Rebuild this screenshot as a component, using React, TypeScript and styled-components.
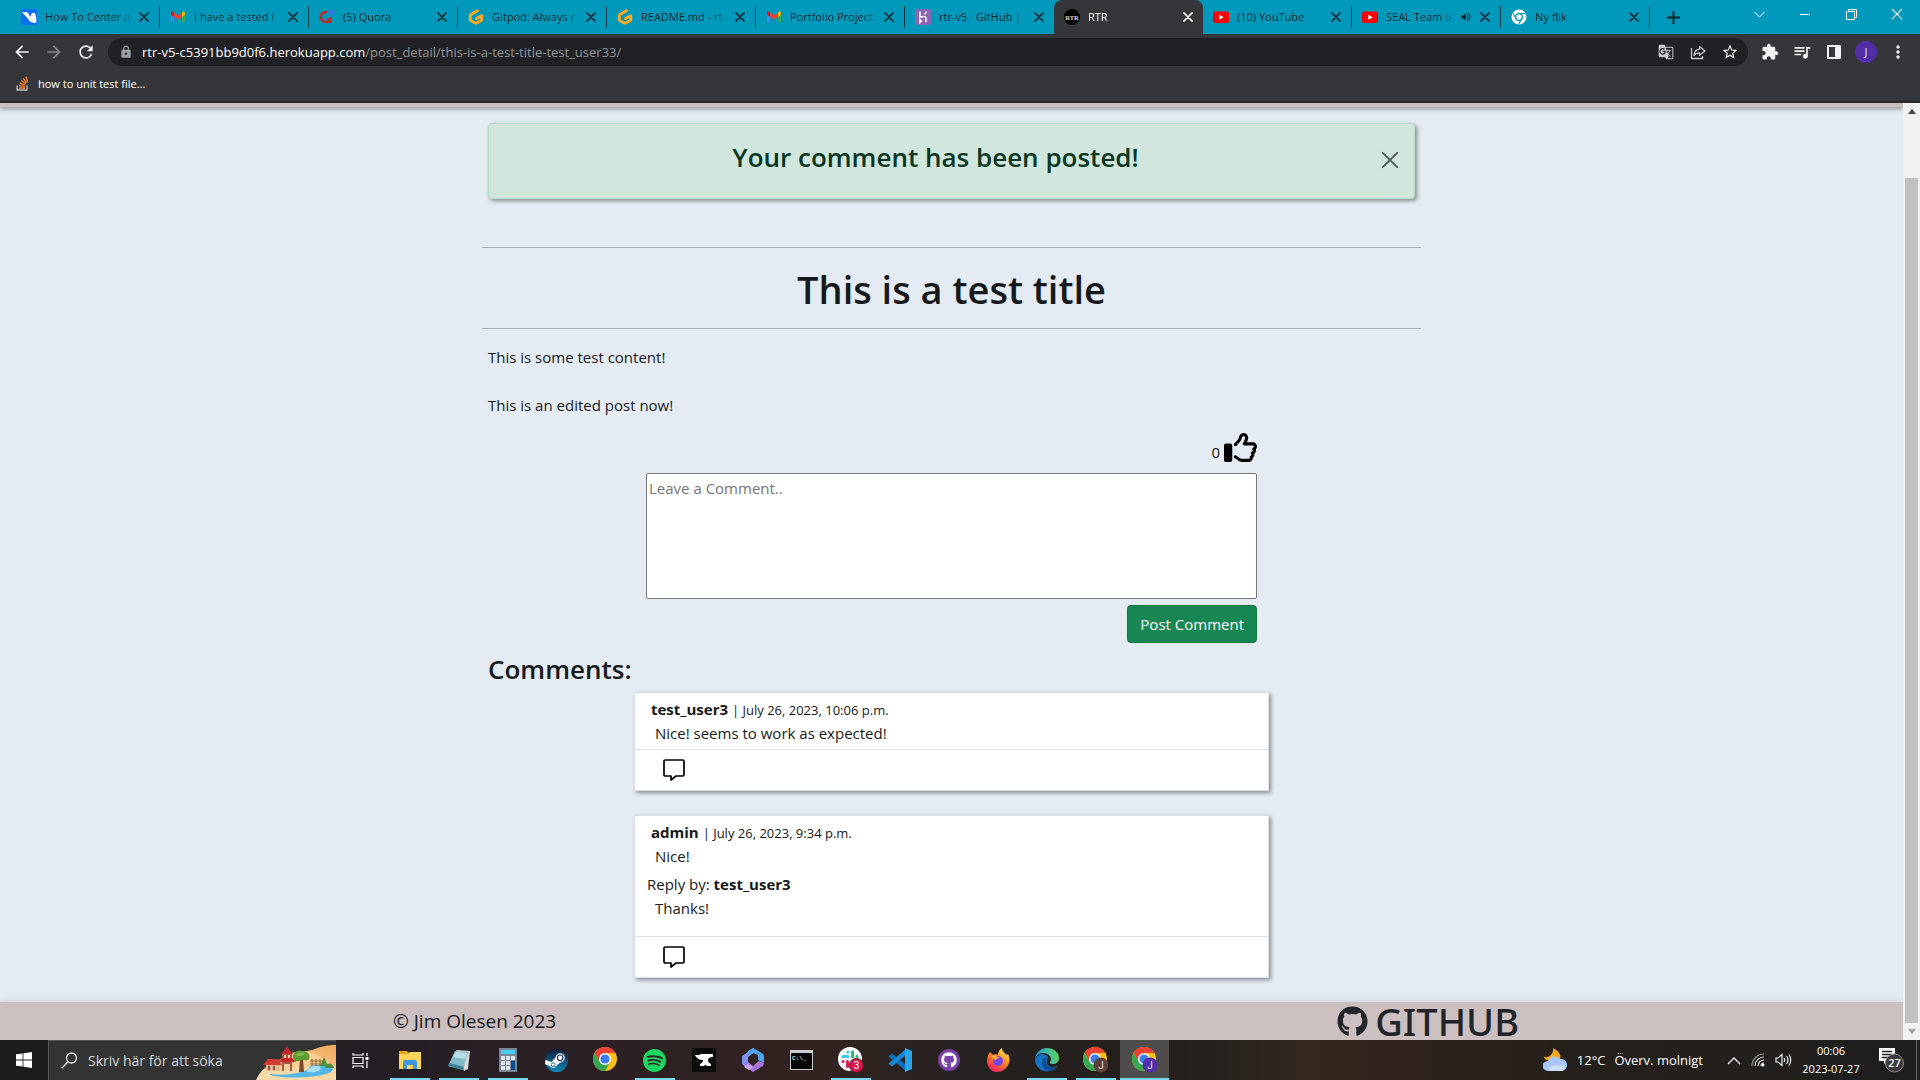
import React, { useState } from "react";
import styled, { createGlobalStyle } from "styled-components";
import { FaGithub, FaRegThumbsUp } from "react-icons/fa6";
import {
  MdArrowBack,
  MdArrowForward,
  MdExtension,
  MdGTranslate,
  MdLock,
  MdMoreVert,
  MdQueueMusic,
  MdRefresh,
  MdStarBorder,
  MdVolumeUp,
} from "react-icons/md";
import { SiSpotify } from "react-icons/si";

const uiFont = `"Open Sans", "Noto Sans", sans-serif`;

const GlobalStyle = createGlobalStyle`
  *, *::before, *::after { box-sizing: border-box; }
  body { margin: 0; font-family: ${uiFont}; font-size: 15px; line-height: 24px; color: #16191c; background: #e4ebf2; }
  button { font: inherit; color: inherit; background: none; border: 0; padding: 0; cursor: pointer; }
  h1, h2, p { margin: 0; }
  svg { display: block; flex: none; }
`;

const Screen = styled.div`
  display: flex;
  flex-direction: column;
  min-height: 100vh;
`;

/* ---------- browser chrome ---------- */

const TabStrip = styled.div`
  display: flex;
  height: 34px;
  padding-left: 11px;
  background: #0099bc;
`;

const Tab = styled.div<{ $active?: boolean; $plain?: boolean }>`
  display: flex;
  align-items: center;
  flex: 0 1 149px;
  min-width: 0;
  padding: 0 7px 0 10px;
  font-size: 11px;
  line-height: 16px;
  color: ${(p) => (p.$active ? "#ffffff" : "#06262e")};
  background: ${(p) => (p.$active ? "#35363a" : "transparent")};
  border-radius: ${(p) => (p.$active ? "8px 8px 0 0" : "0")};
  border-right: ${(p) => (p.$active || p.$plain ? "0" : "1px solid #0a3c48")};
  border-image: linear-gradient(transparent 7px, #0a3c48 7px, #0a3c48 27px, transparent 27px) 1;
`;

const TabIcon = styled.span`
  display: flex;
  width: 16px;
  margin-right: 8px;
`;

const TabTitle = styled.span`
  flex: 1;
  min-width: 0;
  overflow: hidden;
  white-space: nowrap;
  mask-image: linear-gradient(90deg, #000 calc(100% - 16px), transparent);
`;

const TabButton = styled.button`
  display: flex;
  justify-content: center;
  align-items: center;
  width: 16px;
  height: 16px;
  margin-left: 3px;
`;

const NewTab = styled.button`
  display: flex;
  justify-content: center;
  align-items: center;
  width: 28px;
  margin-left: 9px;
  color: #06262e;
`;

const WindowControls = styled.div`
  display: flex;
  align-items: center;
  height: 28px;
  margin-left: auto;
  color: #ffffff;
`;

const WindowButton = styled.button`
  display: flex;
  justify-content: center;
  width: 46px;
`;

const Toolbar = styled.div`
  display: flex;
  align-items: center;
  height: 36px;
  padding: 0 6px 0 12px;
  color: #f1f3f4;
  background: #35363a;
`;

const NavButton = styled.button<{ $dim?: boolean }>`
  display: flex;
  justify-content: center;
  width: 32px;
  color: ${(p) => (p.$dim ? "#83868a" : "#f1f3f4")};
`;

const NavGroup = styled.div`
  display: flex;
  width: 96px;
  margin-left: -6px;
`;

const AddressBar = styled.div`
  display: flex;
  align-items: center;
  flex: 1;
  height: 28px;
  margin: 0 6px;
  padding: 0 2px 0 11px;
  font-size: 13px;
  line-height: 20px;
  color: #9aa0a6;
  background: #202124;
  border-radius: 14px;
`;

const Url = styled.a`
  flex: 1;
  margin-left: 9px;
  color: #8f9398;
  text-decoration: none;
`;

const UrlHost = styled.span`
  color: #ffffff;
`;

const Avatar = styled.span`
  width: 22px;
  height: 22px;
  font-size: 11px;
  line-height: 22px;
  text-align: center;
  color: #e8e0fa;
  background: #512da8;
  border-radius: 50%;
`;

const Bookmarks = styled.nav`
  display: flex;
  align-items: center;
  height: 33px;
  padding: 0 16px 4px;
  background: #35363a;
  border-bottom: 2px solid #2a2a2d;
`;

const Bookmark = styled.a`
  display: flex;
  align-items: center;
  gap: 9px;
  font-size: 11px;
  line-height: 16px;
  color: #ffffff;
  text-decoration: none;
`;

/* ---------- page ---------- */

const Viewport = styled.div`
  display: flex;
  flex: 1;
  background: #e4ebf2;
`;

const Page = styled.div`
  display: flex;
  flex-direction: column;
  flex: 1;
  min-width: 0;
`;

const HeaderEdge = styled.div`
  height: 4px;
  background: #cbbfc0;
  box-shadow: 0 2px 4px rgba(0, 0, 0, 0.4);
`;

const Scrollbar = styled.div`
  display: flex;
  flex-direction: column;
  align-items: center;
  width: 17px;
  background: #f1f1f1;
`;

const ScrollButton = styled.button<{ $dim?: boolean }>`
  display: flex;
  justify-content: center;
  align-items: center;
  width: 17px;
  height: 17px;
  color: ${(p) => (p.$dim ? "#a3a3a3" : "#404040")};
`;

const ScrollTrack = styled.div`
  display: flex;
  flex: 1;
  padding-top: 58px;
`;

const ScrollThumb = styled.div`
  width: 13px;
  background: #c1c1c1;
`;

const Main = styled.main`
  flex: 1;
  width: 100%;
  max-width: 939px;
  margin: 0 auto;
  padding: 16px 0 24px;
`;

const Alert = styled.div`
  display: flex;
  align-items: flex-start;
  height: 76px;
  margin: 0 6px 48px;
  padding: 16px 15px;
  color: #0a3622;
  background: #d1e7dd;
  border: 1px solid #b5dcc9;
  border-radius: 4px;
  box-shadow: 2px 2px 4px rgba(0, 0, 0, 0.4);
`;

const Heading = styled.h2`
  flex: 1;
  font-size: 26px;
  font-weight: 600;
  line-height: 34px;
`;

const AlertText = styled(Heading)`
  padding-right: 14px;
  text-align: center;
`;

const CloseButton = styled.button`
  display: flex;
  padding-top: 11px;
  color: #4b5a53;
`;

const TitleBand = styled.div`
  padding: 17px 0 15px;
  text-align: center;
  border-top: 1px solid #a6adb4;
  border-bottom: 1px solid #a6adb4;
`;

const Title = styled.h1`
  font-size: 38px;
  font-weight: 600;
  line-height: 48px;
`;

const Content = styled.div`
  display: grid;
  gap: 24px;
  padding: 16px 6px 11px;
`;

const Narrow = styled.div`
  max-width: 635px;
  margin: 0 auto;
`;

const Form = styled.form`
  display: flex;
  flex-direction: column;
  align-items: flex-end;
  gap: 6px;
  padding: 0 12px;
`;

const Likes = styled.div`
  display: flex;
  align-items: flex-end;
  gap: 4px;
  height: 39px;
  padding-bottom: 3px;
`;

const LikeButton = styled.button`
  color: #000000;
`;

const CommentBox = styled.textarea`
  display: block;
  width: 100%;
  height: 126px;
  padding: 2px;
  font: inherit;
  background: #ffffff;
  border: 1px solid #767676;
  border-radius: 2px;
  resize: none;
  &::placeholder { color: #757575; }
`;

const PostButton = styled.button`
  height: 38px;
  padding: 0 12px;
  color: #ffffff;
  background: #198754;
  border: 1px solid #0f7a3c;
  border-radius: 4px;
`;

const CommentsHeading = styled(Heading)`
  padding: 9px 6px 6px;
`;

const CommentList = styled.div`
  display: grid;
  gap: 24px;
`;

const Card = styled.article`
  background: #ffffff;
  border: 1px solid #dcdfe3;
  box-shadow: 2px 2px 4px rgba(0, 0, 0, 0.4);
`;

const CardBody = styled.div`
  padding: 4px 16px;
`;

const CardText = styled.p`
  padding-left: 4px;
`;

const Stamp = styled.small`
  font-size: 13px;
  line-height: 16px;
`;

const Reply = styled.div`
  margin: 4px 0 12px -4px;
`;

const ReplyText = styled.p`
  padding-left: 8px;
`;

const CardFooter = styled.div`
  display: flex;
  align-items: center;
  height: 41px;
  padding-left: 28px;
  border-top: 1px solid #dee2e6;
`;

const ReplyButton = styled.button`
  color: #000000;
`;

const Footer = styled.footer`
  display: flex;
  align-items: center;
  justify-content: space-between;
  height: 38px;
  padding: 0 384px 0 393px;
  font-size: 19px;
  line-height: 28px;
  background: #cbbfc0;
  box-shadow: 0 -2px 8px rgba(0, 0, 0, 0.08);
`;

const GithubLink = styled.a`
  display: flex;
  align-items: center;
  gap: 7px;
  font-family: "Noto Sans", sans-serif;
  font-size: 38px;
  font-weight: 500;
  line-height: 38px;
  color: #212529;
  text-decoration: none;
`;

/* ---------- taskbar ---------- */

const Taskbar = styled.div`
  display: flex;
  height: 40px;
  color: #ffffff;
  background: linear-gradient(90deg, #1c1c1e 0%, #241f25 20%, #2c2023 32%, #32231f 43%, #262221 50%, #241f1b 60%, #26221e 64%, #35271d 68%, #2e221b 74%, #25201b 82%, #1f1e1d 100%);
`;

const StartButton = styled.button`
  display: flex;
  justify-content: center;
  align-items: center;
  width: 48px;
`;

const Search = styled.label`
  display: flex;
  align-items: center;
  width: 288px;
  padding-left: 12px;
  background: #333333;
  border: 1px solid #555555;
  border-right: 0;
  border-bottom: 0;
`;

const SearchInput = styled.input`
  flex: 1;
  min-width: 0;
  margin-left: 10px;
  padding: 0;
  font: inherit;
  font-size: 14px;
  color: #ffffff;
  background: none;
  border: 0;
  outline: 0;
  &::placeholder { color: #d6d6d6; opacity: 1; }
`;

const TaskButton = styled.button<{ $open?: boolean; $active?: boolean }>`
  display: flex;
  justify-content: center;
  align-items: center;
  width: 49px;
  background-color: ${(p) => (p.$active ? "#4f4d4c" : "transparent")};
  background-image: ${(p) => (p.$open || p.$active ? "linear-gradient(#76d9f8, #76d9f8)" : "none")};
  background-repeat: no-repeat;
  background-position: bottom;
  background-size: ${(p) => (p.$active ? "100%" : "40px")} 2px;
`;

const Tray = styled.div`
  display: flex;
  align-items: center;
  margin-left: auto;
  padding-right: 3px;
  font-size: 13px;
  line-height: 20px;
`;

const Weather = styled.div`
  display: flex;
  align-items: center;
  gap: 9px;
  margin-right: 24px;
`;

const TrayIcons = styled.div`
  display: flex;
  align-items: center;
  gap: 10px;
`;

const Clock = styled.time`
  width: 60px;
  margin: 0 18px 0 9px;
  font-size: 11px;
  line-height: 18px;
  text-align: center;
  white-space: pre-line;
`;

const Notices = styled.button`
  display: flex;
  align-items: center;
  height: 40px;
  padding-right: 11px;
  border-right: 1px solid #6b6967;
`;

/* ---------- drawings ---------- */

const Cross = ({ size, width }: { size: number; width: number }) => (
  <svg width={size} height={size} viewBox="0 0 10 10" fill="none" stroke="currentColor" strokeWidth={width} strokeLinecap="round">
    <path d="M1 1l8 8M9 1L1 9" />
  </svg>
);

const SpeechBubble = () => (
  <svg width="22" height="22" viewBox="0 0 22 22" fill="none" stroke="currentColor" strokeWidth="1.700" strokeLinejoin="round">
    <path d="M2.300 1h17.400q1.300 0 1.300 1.300v13.400q0 1.300-1.300 1.300H13l-5 4v-4H2.300Q1 17 1 15.700V2.300Q1 1 2.300 1z" />
  </svg>
);

const W3Docs = () => (
  <svg width="16" height="16" viewBox="0 0 16 16">
    <path fill="#0a6ff0" d="M0 0h16v16H0z" />
    <path fill="#fff" d="M1 3h4c2 0 3 2 4 5l2-4h3c1 3 2 7 1 10-4 0-6-1-8-4C5 7 3 6 1 3z" />
  </svg>
);

const Gmail = () => (
  <svg width="16" height="16" viewBox="0 0 16 16">
    <path fill="#4285f4" d="M1 5v7.500q0 .8.800.8H4V7z" />
    <path fill="#34a853" d="M12 7v6.300h2.200q.8 0 .8-.8V5z" />
    <path fill="#fbbc04" d="M12 3.700V8l3-2.300V4c0-1.500-1.600-1.900-2.500-1z" />
    <path fill="#ea4335" d="M4 7.700V3.500l4 3 4-3v4.200l-4 3z" />
    <path fill="#c5221f" d="M1 4v1.700L4 8V3.500L3.500 3C2.500 2.200 1 2.700 1 4z" />
  </svg>
);

const Quora = () => (
  <svg width="16" height="16" viewBox="0 0 16 16" fill="none">
    <path d="M8 3.200A5 5 0 1 0 11.700 8" stroke="#b92b27" strokeWidth="2.600" />
    <path d="M7.500 9.500c2 0 2.500 3.500 5 4" stroke="#b92b27" strokeWidth="2.200" />
    <circle cx="12" cy="3.500" r="2.500" fill="#4a6cf0" />
  </svg>
);

const Gitpod = () => (
  <svg width="16" height="16" viewBox="0 0 16 16" fill="none">
    <path d="M9.500 1.800L3 5.400q-.8.500-.8 1.300v3.600q0 .9.800 1.400L7.200 14q.8.500 1.600 0l4.200-2.300q.8-.5.800-1.400V6.800L8.500 9.600" stroke="#ffa71e" strokeWidth="2.900" strokeLinecap="round" strokeLinejoin="round" />
  </svg>
);

const Heroku = () => (
  <svg width="16" height="16" viewBox="0 0 16 16" fill="none">
    <rect width="16" height="16" rx="2" fill="#8a64b5" />
    <path d="M5 2.500v6c3-1.500 6-1.500 6 .8v4M5 11v2.500L6.500 12zM11 2.500q0 1.500-1.300 3" stroke="#fff" strokeWidth="1.500" />
  </svg>
);

const Rtr = () => (
  <svg width="16" height="16" viewBox="0 0 16 16">
    <circle cx="8" cy="8" r="8" fill="#000" />
    <text x="8" y="10.500" textAnchor="middle" fontFamily="Liberation Serif, serif" fontWeight="700" fontSize="6.500" fill="#ddd">RTR</text>
  </svg>
);

const YouTube = () => (
  <svg width="16" height="16" viewBox="0 0 16 16">
    <rect y="2.500" width="16" height="11.500" rx="2.500" fill="#f00" />
    <path d="M6.300 5.700v5l4.400-2.500z" fill="#fff" />
  </svg>
);

const ChromeMono = () => (
  <svg width="16" height="16" viewBox="0 0 16 16" fill="none">
    <circle cx="8" cy="8" r="7.500" fill="#fff" />
    <circle cx="8" cy="8" r="3.300" stroke="#0099bc" strokeWidth="1.300" />
    <path d="M8 4.700h6.500M5.200 9.700L2 4.200M10.800 9.700l-3.200 5.600" stroke="#0099bc" strokeWidth="1.200" />
  </svg>
);

const StackOverflow = () => (
  <svg width="13" height="15" viewBox="0 0 13 15" fill="none" strokeWidth="1.300">
    <path d="M1 9.500v4.500h10V9.500" stroke="#b8bcc0" />
    <path d="M3 12h6M3 9.700l6 .7M3.600 7.200l5.600 1.700M5 4.500l5 3M7.300 2.300l3.500 4.600M10 .8l1.500 5" stroke="#f48024" />
  </svg>
);

const Share = () => (
  <svg width="16" height="16" viewBox="0 0 16 16" fill="none" stroke="#c8cbce" strokeWidth="1.300" strokeLinejoin="round">
    <path d="M1.500 4v10.500h11V12M9.500 2.500L15 7l-5.500 4.300V8.800C7 8.700 5.300 9.500 4 11.500 4.300 8 6.300 5.600 9.500 5.200z" />
  </svg>
);

const SidePanel = () => (
  <svg width="16" height="14" viewBox="0 0 16 14">
    <path fillRule="evenodd" fill="#f1f3f4" d="M1 0h14v14H1zM3 2v10h6V2z" />
  </svg>
);

const Windows = () => (
  <svg width="16" height="16" viewBox="0 0 16 16" fill="#fff">
    <path d="M0 2.300L6.600 1.400v6.200H0zM7.400 1.300L16 0v7.600H7.400zM0 8.400h6.600v6.200L0 13.700zM7.400 8.400H16V16l-8.600-1.300z" />
  </svg>
);

const Magnifier = () => (
  <svg width="17" height="17" viewBox="0 0 17 17" fill="none" stroke="#e6e6e6" strokeWidth="1.300">
    <circle cx="10.500" cy="6" r="5" />
    <path d="M7 9.800L.8 16.200" />
  </svg>
);

const Village = () => (
  <svg width="80" height="39" viewBox="0 0 80 39">
    <defs>
      <linearGradient id="sand" x1="0" x2="1" y1="1" y2="0">
        <stop offset="0" stopColor="#fbe2b8" />
        <stop offset="1" stopColor="#f0a95a" />
      </linearGradient>
    </defs>
    <path fill="url(#sand)" d="M0 39c4-9 10-14 18-17l12-7c8-6 20-4 26-6 10-4 17-5 24-5v35z" />
    <path fill="#f7cf92" d="M38 13c12-6 24 0 42 13v6H34z" />
    <path fill="#f6d9a6" d="M6 32c20-6 50-8 74-4v11H2z" />
    <path fill="#53b6e8" d="M14 33c16 2 34-1 40-6-3-2 6-4 16-3 8 1 10 6 0 9-14 4-40 5-56 1z" />
    <path fill="#a8e0f5" d="M50 30c5-3 4-5 10-5 5 0 7 3 2 5-4 2-8 2-12 0z" />
    <path fill="#e8b88d" d="M10 24h14v6H10z" />
    <path fill="#7a5a48" d="M12 25h2v4h-2zM17 25h2v4h-2z" />
    <path fill="#d63a32" d="M7 24l5-6h10l4 6z" />
    <path fill="#b0563f" d="M26 12h10v18H26z" />
    <path fill="#f0cfa0" d="M28 14h2v4h-2zM32 14h2v4h-2zM28 23h6v7h-6z" />
    <path fill="#c8262d" d="M31 4l1 3 5 6H25l5-6zM23 21l3-4h10l4 4z" />
    <path fill="#7a4a2c" d="M44 18h3l1 13h-5z" />
    <path fill="#5e9c2f" d="M37 17c0-7 5-8 9-7 6 0 9 4 7 8-3 3-6 0-8 1-3 2-8 2-8-2z" />
    <path fill="#7dbb42" d="M40 14c2-3 7-3 9-1-2 2-7 3-9 1z" />
    <path stroke="#9a6a35" strokeWidth="1.200" d="M54 20h14M54 23h14M56 18v7M60 18v7M64 18v7" />
    <path fill="#4d8f3a" d="M64 25l4-9 4 9zM69 27c1-6 8-6 9 0z" />
  </svg>
);

const TaskView = () => (
  <svg width="17" height="17" viewBox="0 0 17 17" fill="none" stroke="#fff" strokeWidth="1.200">
    <path d="M1 1v2h10V1M1 5.500h10v6H1zM1 16v-2h10v2M15 1v3M15 9v7" />
    <path d="M13.500 5h3v3h-3z" fill="#fff" stroke="none" />
  </svg>
);

const Explorer = () => (
  <svg width="22" height="20" viewBox="0 0 22 20">
    <path fill="#e8a317" d="M0 1h8l2 2v4H0z" />
    <path fill="#ffd35c" d="M0 4h9l2-2h11v17H0z" />
    <path fill="#3b97e0" d="M4 12q0-2 2-2h10q2 0 2 2v7h-4v-4H8v4H4z" />
  </svg>
);

const Notepad = () => (
  <svg width="24" height="24" viewBox="0 0 24 24">
    <path fill="#d8d9da" d="M9 2l14 1-2 18-4 2z" />
    <path fill="#83bcc8" d="M8 3l13 1-5 18L1 18z" />
    <path fill="#b9dfe6" d="M9 4l11 1-2 6L6 9z" />
    <path fill="#3c8496" d="M3 15l14 4-1 3L1 18z" />
  </svg>
);

const Calculator = () => (
  <svg width="18" height="24" viewBox="0 0 18 24">
    <path fill="#7b8794" d="M0 0h18v24H0z" />
    <path fill="#46cdf5" d="M2 2h14v4H2z" />
    <path fill="#dfe4e8" d="M2 8h4v4H2zM7 8h4v4H7zM12 8h4v4h-4zM2 13h4v4H2zM7 13h4v4H7zM2 18h4v4H2zM7 18h4v4H7z" />
    <path fill="#0d4d92" d="M12 13h4v9h-4z" />
  </svg>
);

const Steam = () => (
  <svg width="23" height="23" viewBox="0 0 24 24">
    <defs>
      <linearGradient id="steam" x1="0" x2="0" y1="0" y2="1">
        <stop offset="0" stopColor="#0b1d3f" />
        <stop offset="1" stopColor="#1387b8" />
      </linearGradient>
    </defs>
    <circle cx="12" cy="12" r="12" fill="url(#steam)" />
    <path stroke="#fff" strokeWidth="4.500" d="M0 13.500l8 3" />
    <path fill="#fff" d="M7 13l5-5 5 5-7 6z" />
    <circle cx="8.500" cy="16.500" r="3.200" fill="#fff" />
    <circle cx="15.800" cy="9.200" r="4.800" fill="#fff" />
    <circle cx="15.800" cy="9.200" r="2.900" fill="none" stroke="#12305c" strokeWidth="1.200" />
    <circle cx="8.500" cy="16.500" r="2" fill="none" stroke="#12659a" />
  </svg>
);

const Chrome = ({ badge }: { badge?: string }) => (
  <svg width="25" height="26" viewBox="0 0 25 26">
    <circle cx="12" cy="12" r="12" fill="#fbc116" />
    <path fill="#ea4335" d="M1.600 6a12 12 0 0 1 20.800 0H12l-5.200 9z" />
    <path fill="#34a853" d="M1.600 6A12 12 0 0 0 12 24l5.200-9H6.800z" />
    <circle cx="12" cy="12" r="6" fill="#fff" />
    <circle cx="12" cy="12" r="4.600" fill="#3b7ded" />
    {badge && (
      <>
        <circle cx="18" cy="18" r="7.500" fill={badge} />
        <text x="18" y="21.500" textAnchor="middle" fontFamily="Roboto, sans-serif" fontSize="10" fill="#e8e0dc">J</text>
      </>
    )}
  </svg>
);

const Anvil = () => (
  <svg width="24" height="24" viewBox="0 0 24 24">
    <path fill="#0c0c0c" d="M0 0h24v24H0z" />
    <path fill="#fff" d="M8 6h13v3c-3 0-5 1-5 3s1 3 3 4v2h-4l-1-1h-1l-1 1H8v-2c2-1 3-2 3-4-3 0-6-1-8-5h5z" />
  </svg>
);

const M365 = () => (
  <svg width="22" height="24" viewBox="0 0 22 24">
    <path fill="#7d8ff0" d="M11 0l-5 4-6 4v8l6 5V9l8-6z" />
    <path fill="#4fa3e8" d="M11 0l9 5q2 1 2 4v6l-6-3V7L11 5 6 8V3z" />
    <path fill="#a474dd" d="M6 14l5 4 6-5 5 2q0 3-3 4l-8 5-9-6z" />
    <path fill="#c9a5ee" d="M6 16l5 3-4 3-5-3z" />
  </svg>
);

const Terminal = () => (
  <svg width="23" height="20" viewBox="0 0 23 20">
    <path fill="#c9ced3" d="M0 0h23v20H0z" />
    <path fill="#060606" d="M1 3h21v16H1z" />
    <text x="2" y="10" fontFamily="Liberation Mono, monospace" fontWeight="700" fontSize="6" fill="#ddd">C:\_</text>
  </svg>
);

const Slack = () => (
  <svg width="25" height="26" viewBox="0 0 25 26">
    <circle cx="12" cy="12" r="12" fill="#fff" />
    <g strokeWidth="3.200" strokeLinecap="round">
      <path d="M5 9.500h5M10 5v.100" stroke="#36c5f0" />
      <path d="M14.500 4.800v5M19 9.500h.1" stroke="#2eb67d" />
      <path d="M9.500 14.500v5M5 14.500h.1" stroke="#e01e5a" />
      <path d="M14.500 14.500h5" stroke="#ecb22e" />
    </g>
    <circle cx="18.500" cy="18.500" r="7" fill="#e0144c" stroke="#3a2022" />
    <text x="18.500" y="22" textAnchor="middle" fontFamily="Roboto, sans-serif" fontSize="10" fill="#fff">3</text>
  </svg>
);

const VsCode = () => (
  <svg width="24" height="24" viewBox="0 0 24 24">
    <path fill="#0a72bd" d="M2 7l2-1.500L18 17v6L.5 8.500z" />
    <path fill="#1488d4" d="M2 17l2 1.500L18 7V1L.5 15.500z" />
    <path fill="#29a5ee" d="M17 0l7 3v18l-7 3V0z" />
  </svg>
);

const GithubDesktop = () => (
  <svg width="22" height="22" viewBox="0 0 22 22">
    <circle cx="11" cy="11" r="11" fill="#7b3fa8" />
    <svg x="3" y="3" width="16" height="16" viewBox="0 0 16 16">
      <FaGithub size={16} color="#fff" />
    </svg>
  </svg>
);

const Firefox = () => (
  <svg width="24" height="24" viewBox="0 0 24 24">
    <defs>
      <linearGradient id="fire" x1=".8" x2=".2" y1="0" y2="1">
        <stop offset="0" stopColor="#fff04a" />
        <stop offset=".5" stopColor="#ff7a22" />
        <stop offset="1" stopColor="#e8186c" />
      </linearGradient>
    </defs>
    <path fill="url(#fire)" d="M4 4l3 3c1-1 3-1 5 0 0-3 1-5 4-7 0 4 3 5 5 7l1-1c2 4 2 8 0 11-2 4-6 7-11 7C5 24 1 19 1 13c0-4 1-6 3-9z" />
    <circle cx="12" cy="13" r="5" fill="#7542e5" />
    <path fill="#ffa436" d="M5 8c3-1 6 0 9 2-3 0-4 1-4 2-3 0-4-2-5-4z" />
  </svg>
);

const Edge = () => (
  <svg width="24" height="24" viewBox="0 0 24 24">
    <defs>
      <linearGradient id="edge" x1="0" x2="1" y1=".3" y2=".2">
        <stop offset="0" stopColor="#1d9be2" />
        <stop offset="1" stopColor="#5fd65a" />
      </linearGradient>
    </defs>
    <path fill="#1571c4" d="M0 12a12 12 0 0 0 22 6c-4 2-9 1-10-3-1-3 1-4 1-6-3-5-12-3-13 3z" />
    <path fill="url(#edge)" d="M0 11C1 4 6 0 12 0c7 0 12 5 12 10 0 4-3 6-6 6-2 0-4-1-3-2 3-5-2-9-7-9-4 0-7 3-8 6z" />
    <path fill="#0d4f96" d="M8 11c-3 7 2 13 9 12 2-1 4-3 5-5-5 2-10 1-11-3-1-2 0-4 1-5-2-1-3 0-4 1z" />
  </svg>
);

const MoonCloud = () => (
  <svg width="25" height="24" viewBox="0 0 25 24">
    <path fill="#f6a821" d="M10 0c5 3 9 6 7 12H5C3 12 1 11 1 9c5 1 10-3 9-9z" />
    <path fill="#a9c6f7" d="M6 23a6 5 0 0 1-1-10 7 7 0 0 1 12-2 6 6 0 0 1 2 12z" />
    <path fill="#cfe0fc" d="M6 20c3-3 10-4 16-1-1 3-3 4-4 4H6z" />
  </svg>
);

const Wifi = () => (
  <svg width="14" height="14" viewBox="0 0 14 14" fill="none" stroke="#e8e8e8" strokeWidth="1.200">
    <path d="M1 13A12 12 0 0 1 13 1" opacity=".6" />
    <path d="M4 13a9 9 0 0 1 9-9M7 13a6 6 0 0 1 6-6M10 13a3 3 0 0 1 3-3" />
    <circle cx="12" cy="12" r="1.500" fill="#fff" stroke="none" />
  </svg>
);

const Speaker = () => (
  <svg width="17" height="14" viewBox="0 0 17 14" fill="none" stroke="#f2f2f2" strokeWidth="1.200">
    <path d="M1 5v4h2l4 3.500v-11L3 5zM9 5q1.500 2 0 4M11.500 3q3 4 0 8M14 1.500q3.500 5.500 0 11" />
  </svg>
);

const NoticeIcon = () => (
  <svg width="26" height="26" viewBox="0 0 26 26">
    <path fill="#fff" d="M0 1h16v13H8l-3 3v-3H0z" />
    <path stroke="#222" strokeWidth="1.300" d="M3 4.500h10M3 7.500h10M3 10.500h6" />
    <circle cx="15.500" cy="16" r="9" fill="#3a3a3a" stroke="#8a8a8a" />
    <text x="15.500" y="20" textAnchor="middle" fontFamily="Open Sans, sans-serif" fontWeight="600" fontSize="11" fill="#fff">27</text>
  </svg>
);

/* ---------- data ---------- */

type TabInfo = { title: string; icon: React.ReactNode; active?: boolean; plain?: boolean; sound?: boolean };

const tabs: TabInfo[] = [
  { title: "How To Center a", icon: <W3Docs /> },
  { title: "I have a tested I", icon: <Gmail /> },
  { title: "(5) Quora", icon: <Quora /> },
  { title: "Gitpod: Always r", icon: <Gitpod /> },
  { title: "README.md - rt", icon: <Gitpod /> },
  { title: "Portfolio Project", icon: <Gmail /> },
  { title: "rtr-v5 · GitHub |", icon: <Heroku />, plain: true },
  { title: "RTR", icon: <Rtr />, active: true },
  { title: "(10) YouTube", icon: <YouTube /> },
  { title: "SEAL Team 6", icon: <YouTube />, sound: true },
  { title: "Ny flik", icon: <ChromeMono /> },
];

type Comment = { author: string; date: string; text: string; reply?: { author: string; text: string } };

const comments: Comment[] = [
  { author: "test_user3", date: "July 26, 2023, 10:06 p.m.", text: "Nice! seems to work as expected!" },
  { author: "admin", date: "July 26, 2023, 9:34 p.m.", text: "Nice!", reply: { author: "test_user3", text: "Thanks!" } },
];

const apps: { name: string; icon: React.ReactNode; open?: boolean; active?: boolean }[] = [
  { name: "Task view", icon: <TaskView /> },
  { name: "File Explorer", icon: <Explorer />, open: true },
  { name: "Notepad", icon: <Notepad />, open: true },
  { name: "Calculator", icon: <Calculator />, open: true },
  { name: "Steam", icon: <Steam /> },
  { name: "Chrome", icon: <Chrome /> },
  { name: "Spotify", icon: <SiSpotify size={23} color="#1ed760" />, open: true },
  { name: "Anvil", icon: <Anvil /> },
  { name: "Microsoft 365", icon: <M365 /> },
  { name: "Command Prompt", icon: <Terminal /> },
  { name: "Slack", icon: <Slack />, open: true },
  { name: "VS Code", icon: <VsCode /> },
  { name: "GitHub Desktop", icon: <GithubDesktop /> },
  { name: "Firefox", icon: <Firefox /> },
  { name: "Edge", icon: <Edge />, open: true },
  { name: "Chrome, first profile", icon: <Chrome badge="#5d4037" />, open: true },
  { name: "Chrome, second profile", icon: <Chrome badge="#512da8" />, active: true },
];

/* ---------- sections ---------- */

const BrowserChrome = () => (
  <header>
    <TabStrip>
      {tabs.map((tab, i) => (
        <Tab key={i} $active={tab.active} $plain={tab.plain}>
          <TabIcon>{tab.icon}</TabIcon>
          <TabTitle>{tab.title}</TabTitle>
          {tab.sound && <TabButton aria-label="Mute"><MdVolumeUp size={12} /></TabButton>}
          <TabButton aria-label="Close tab"><Cross size={10} width={1.700} /></TabButton>
        </Tab>
      ))}
      <NewTab aria-label="New tab">
        <svg width="13" height="13" viewBox="0 0 13 13" stroke="currentColor" strokeWidth="2"><path d="M6.500 0v13M0 6.500h13" /></svg>
      </NewTab>
      <WindowControls>
        <WindowButton aria-label="Search tabs">
          <svg width="11" height="11" viewBox="0 0 11 11" fill="none" stroke="currentColor"><path d="M.5 3l5 5 5-5" /></svg>
        </WindowButton>
        <WindowButton aria-label="Minimize">
          <svg width="11" height="11" viewBox="0 0 11 11" stroke="currentColor"><path d="M0 5.500h10" /></svg>
        </WindowButton>
        <WindowButton aria-label="Restore">
          <svg width="11" height="11" viewBox="0 0 11 11" fill="none" stroke="currentColor"><path d="M.5 2.500h8v8h-8zM2.500 2.500v-2h8v8h-2" /></svg>
        </WindowButton>
        <WindowButton aria-label="Close"><Cross size={12} width={0.900} /></WindowButton>
      </WindowControls>
    </TabStrip>
    <Toolbar>
      <NavGroup>
        <NavButton aria-label="Back"><MdArrowBack size={20} /></NavButton>
        <NavButton aria-label="Forward" $dim><MdArrowForward size={20} /></NavButton>
        <NavButton aria-label="Reload"><MdRefresh size={20} /></NavButton>
      </NavGroup>
      <AddressBar>
        <MdLock size={14} />
        <Url href="#">
          <UrlHost>rtr-v5-c5391bb9d0f6.herokuapp.com</UrlHost>/post_detail/this-is-a-test-title-test_user33/
        </Url>
        <NavButton aria-label="Translate"><MdGTranslate size={16} color="#c8cbce" /></NavButton>
        <NavButton aria-label="Share"><Share /></NavButton>
        <NavButton aria-label="Bookmark"><MdStarBorder size={18} /></NavButton>
      </AddressBar>
      <NavButton aria-label="Extensions"><MdExtension size={18} /></NavButton>
      <NavButton aria-label="Media"><MdQueueMusic size={20} /></NavButton>
      <NavButton aria-label="Side panel"><SidePanel /></NavButton>
      <NavButton aria-label="Profile"><Avatar>J</Avatar></NavButton>
      <NavButton aria-label="Menu"><MdMoreVert size={20} /></NavButton>
    </Toolbar>
    <Bookmarks>
      <Bookmark href="#"><StackOverflow />how to unit test file...</Bookmark>
    </Bookmarks>
  </header>
);

const CommentCard = ({ comment }: { comment: Comment }) => (
  <Card>
    <CardBody>
      <p><strong>{comment.author}</strong> <Stamp>| {comment.date}</Stamp></p>
      <CardText>{comment.text}</CardText>
      {comment.reply && (
        <Reply>
          <p>Reply by: <strong>{comment.reply.author}</strong></p>
          <ReplyText>{comment.reply.text}</ReplyText>
        </Reply>
      )}
    </CardBody>
    <CardFooter>
      <ReplyButton aria-label="Reply"><SpeechBubble /></ReplyButton>
    </CardFooter>
  </Card>
);

const Post = () => {
  const [showAlert, setShowAlert] = useState(true);
  return (
    <Main>
      {showAlert && (
        <Alert role="alert">
          <AlertText>Your comment has been posted!</AlertText>
          <CloseButton aria-label="Close" onClick={() => setShowAlert(false)}><Cross size={18} width={1} /></CloseButton>
        </Alert>
      )}
      <TitleBand><Title>This is a test title</Title></TitleBand>
      <Content>
        <p>This is some test content!</p>
        <p>This is an edited post now!</p>
      </Content>
      <Narrow>
        <Form onSubmit={(e) => e.preventDefault()}>
          <Likes>
            <span>0</span>
            <LikeButton type="button" aria-label="Like"><FaRegThumbsUp size={33} /></LikeButton>
          </Likes>
          <CommentBox aria-label="Comment" placeholder="Leave a Comment.." />
          <PostButton type="submit">Post Comment</PostButton>
        </Form>
      </Narrow>
      <CommentsHeading>Comments:</CommentsHeading>
      <Narrow>
        <CommentList>
          {comments.map((c) => <CommentCard key={c.author} comment={c} />)}
        </CommentList>
      </Narrow>
    </Main>
  );
};

const DesktopBar = () => (
  <Taskbar>
    <StartButton aria-label="Start"><Windows /></StartButton>
    <Search>
      <Magnifier />
      <SearchInput aria-label="Search" placeholder="Skriv här för att söka" />
      <Village />
    </Search>
    {apps.map((app) => (
      <TaskButton key={app.name} aria-label={app.name} $open={app.open} $active={app.active}>{app.icon}</TaskButton>
    ))}
    <Tray>
      <Weather><MoonCloud /><span>12°C</span><span>Överv. molnigt</span></Weather>
      <TrayIcons>
        <svg width="14" height="9" viewBox="0 0 14 9" fill="none" stroke="#fff" strokeWidth="1.300"><path d="M1 8l6-6 6 6" /></svg>
        <Wifi />
        <Speaker />
      </TrayIcons>
      <Clock>{"00:06\n2023-07-27"}</Clock>
      <Notices aria-label="Notifications"><NoticeIcon /></Notices>
    </Tray>
  </Taskbar>
);

export default function App() {
  return (
    <Screen>
      <GlobalStyle />
      <BrowserChrome />
      <Viewport>
        <Page>
          <HeaderEdge />
          <Post />
          <Footer>
            <span>© Jim Olesen 2023</span>
            <GithubLink href="#"><FaGithub size={31} />GITHUB</GithubLink>
          </Footer>
        </Page>
        <Scrollbar>
          <ScrollButton aria-label="Scroll up"><svg width="8" height="5" viewBox="0 0 8 5" fill="currentColor"><path d="M0 5l4-5 4 5z" /></svg></ScrollButton>
          <ScrollTrack><ScrollThumb /></ScrollTrack>
          <ScrollButton aria-label="Scroll down" $dim><svg width="8" height="5" viewBox="0 0 8 5" fill="currentColor"><path d="M0 0l4 5 4-5z" /></svg></ScrollButton>
        </Scrollbar>
      </Viewport>
      <DesktopBar />
    </Screen>
  );
}
